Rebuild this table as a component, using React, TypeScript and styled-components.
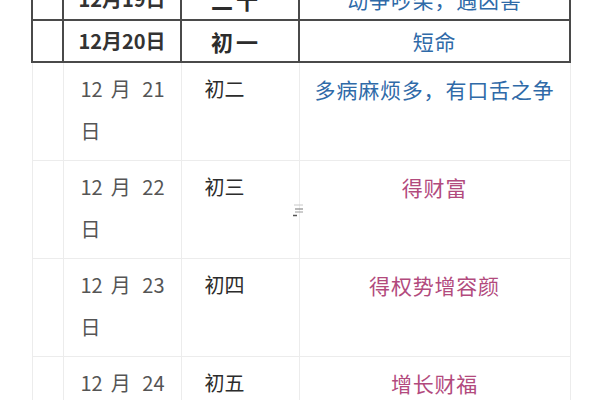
import React from "react";
import styled, { createGlobalStyle, css } from "styled-components";

const Global = createGlobalStyle`
  html, body { margin: 0; padding: 0; background: #fff; }
  body { font-family: "Noto Sans CJK SC", "Noto Sans", sans-serif; overflow: hidden; }
`;

const Page = styled.div`
  position: relative;
  width: 600px;
  height: 400px;
  overflow: hidden;
  background: #fff;
`;

const Sheet = styled.div`
  margin-top: -23px;
  padding-left: 31px;
`;

const Table = styled.table`
  border-collapse: collapse;
  table-layout: fixed;
  width: 538px;
`;

const Col = styled.col<{ $w: number }>`
  width: ${(p) => p.$w}px;
`;

type Variant = "head" | "body";

const Row = styled.tr<{ $variant: Variant }>`
  ${(p) =>
    p.$variant === "head"
      ? css`
          height: 42px;
          & > td {
            border: 2px solid #4a4a4a;
            font-weight: 700;
            text-align: center;
            vertical-align: middle;
            padding: 0;
            line-height: 40px;
          }
        `
      : css`
          & > td {
            border: 1px solid #ececec;
            vertical-align: top;
            padding: 5px 0 8px;
            line-height: 42px;
          }
        `}
`;

const Blank = styled.td``;

const DateCell = styled.td<{ $variant: Variant }>`
  font-size: 20px;
  ${(p) =>
    p.$variant === "head"
      ? css`
          color: #333;
        `
      : css`
          color: #555;
          text-align: justify;
          text-align-last: left;
          padding-left: 17px !important;
          padding-right: 16px !important;
        `}
`;

const LunarCell = styled.td<{ $variant: Variant }>`
  font-size: 20px;
  color: #2c2c2c;
  ${(p) =>
    p.$variant === "head"
      ? css`
          letter-spacing: 3px;
          font-size: 22px;
          padding-right: 8px !important;
        `
      : css`
          padding-left: 23px !important;
        `}
`;

const EventCell = styled.td<{ $tone: "blue" | "pink" }>`
  font-size: 21px;
  letter-spacing: 0.8px;
  font-weight: 400 !important;
  text-align: center !important;
  color: ${(p) => (p.$tone === "blue" ? "#2f6aa8" : "#b24a7d")};
`;

const Handle = styled.svg`
  position: absolute;
  left: 292px;
  top: 203px;
  width: 12px;
  height: 15px;
`;

type Item = {
  date: string;
  lunar: string;
  text: string;
  tone: "blue" | "pink";
  variant: Variant;
};

const rows: Item[] = [
  { date: "12月19日", lunar: "二十", text: "动争吵架，遇凶害", tone: "blue", variant: "head" },
  { date: "12月20日", lunar: "初一", text: "短命", tone: "blue", variant: "head" },
  { date: "12 月 21 日", lunar: "初二", text: "多病麻烦多，有口舌之争", tone: "blue", variant: "body" },
  { date: "12 月 22 日", lunar: "初三", text: "得财富", tone: "pink", variant: "body" },
  { date: "12 月 23 日", lunar: "初四", text: "得权势增容颜", tone: "pink", variant: "body" },
  { date: "12 月 24 日", lunar: "初五", text: "增长财福", tone: "pink", variant: "body" },
];

export default function App() {
  return (
    <Page>
      <Global />
      <Sheet>
        <Table>
          <colgroup>
            <Col $w={31} />
            <Col $w={118} />
            <Col $w={118} />
            <Col $w={271} />
          </colgroup>
          <tbody>
            {rows.map((r) => (
              <Row key={r.date} $variant={r.variant}>
                <Blank />
                <DateCell $variant={r.variant}>{r.date}</DateCell>
                <LunarCell $variant={r.variant}>{r.lunar}</LunarCell>
                <EventCell $tone={r.tone}>{r.text}</EventCell>
              </Row>
            ))}
          </tbody>
        </Table>
      </Sheet>
      <Handle viewBox="0 0 12 15">
        <line x1="2" y1="2" x2="11" y2="2" stroke="#c8c8c8" strokeWidth="1" />
        <line x1="3" y1="6" x2="11" y2="6" stroke="#8a8a8a" strokeWidth="1.2" />
        <line x1="3" y1="9" x2="11" y2="9" stroke="#9a9a9a" strokeWidth="1" />
        <line x1="1" y1="12.5" x2="5" y2="12.5" stroke="#555" strokeWidth="1.5" />
      </Handle>
    </Page>
  );
}
